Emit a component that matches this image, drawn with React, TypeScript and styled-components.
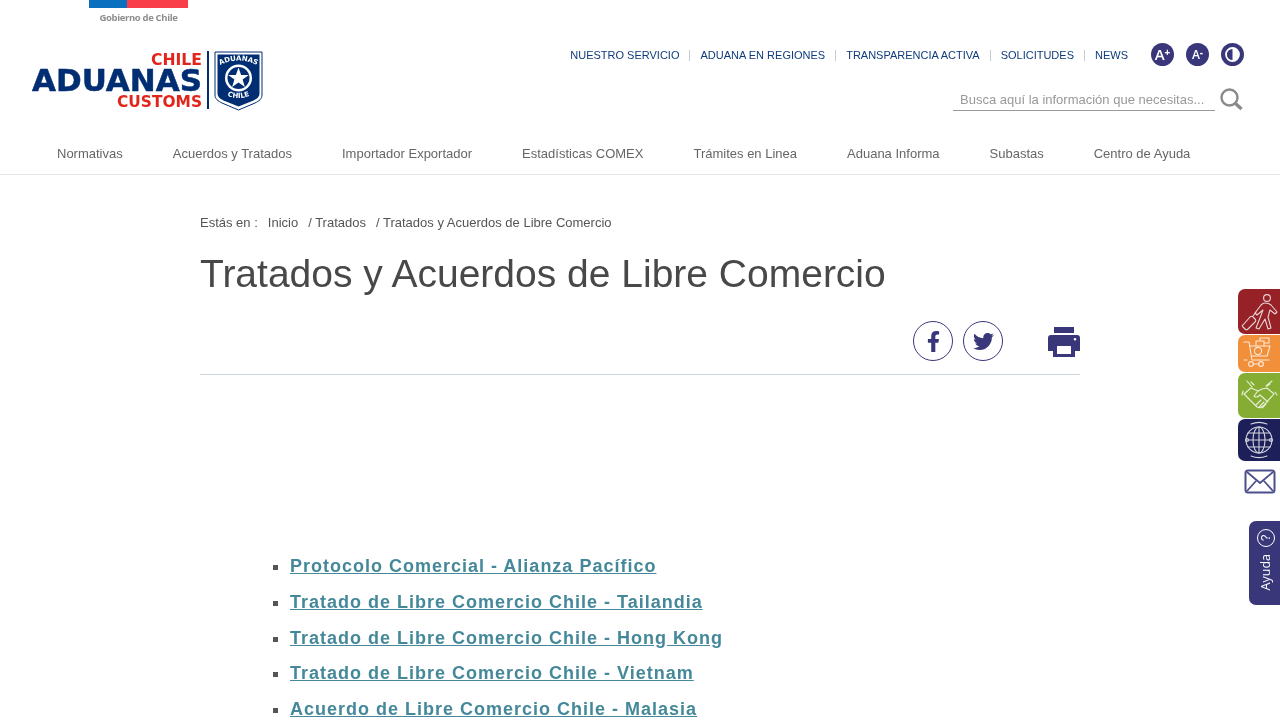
import React from "react";
import styled, { createGlobalStyle } from "styled-components";
import { FaFacebookF, FaTwitter } from "react-icons/fa";

const GlobalStyle = createGlobalStyle`
  html, body {
    margin: 0;
    padding: 0;
    height: 720px;
    overflow: hidden;
    background: #fff;
    font-family: "Liberation Sans", Arial, sans-serif;
    color: #555;
  }
`;

const Page = styled.div`
  position: relative;
  width: 1280px;
  height: 720px;
  overflow: hidden;
  will-change: transform;
`;

const GovMark = styled.div`
  width: 99px;
  margin-left: 89px;
  height: 24px;
`;

const Flag = styled.div`
  display: flex;
  height: 8px;
`;

const FlagPart = styled.div<{ $color: string; $width: number }>`
  width: ${(p) => p.$width}px;
  background: ${(p) => p.$color};
`;

const GovLabel = styled.div`
  margin-top: 4px;
  font-family: "Open Sans", sans-serif;
  font-size: 9.5px;
  line-height: 11px;
  font-weight: 700;
  color: #8f8f8f;
  text-align: center;
  white-space: nowrap;
  letter-spacing: -0.35px;
`;

const Header = styled.header`
  display: flex;
  justify-content: space-between;
  height: 110px;
  padding: 0 36px 0 32px;
`;

const LogoSvg = styled.svg`
  display: block;
  margin-top: 27px;
  width: 231px;
  height: 60px;
`;

const HeaderRight = styled.div`
  display: flex;
  flex-direction: column;
  align-items: flex-end;
  padding-top: 19px;
`;

const TopRow = styled.div`
  display: flex;
  align-items: center;
  height: 24px;
`;

const TopLink = styled.a`
  font-size: 11px;
  line-height: 11px;
  color: #0f3c7d;
  text-transform: uppercase;
  padding: 0 10px;
  border-left: 1px solid #c5ccd2;
  &:first-child {
    border-left: 0;
  }
`;

const A11yGroup = styled.div`
  display: flex;
  gap: 12px;
  margin-left: 13px;
`;

const A11yButton = styled.div<{ $size?: number }>`
  width: 23px;
  height: 23px;
  border-radius: 50%;
  background: #39377a;
  color: #fff;
  display: flex;
  align-items: center;
  justify-content: center;
  font-family: "Open Sans", sans-serif;
  font-weight: 600;
  font-size: ${(p) => p.$size ?? 15}px;
  line-height: 1;
  margin-top: -1px;
`;

const Sup = styled.span`
  font-size: 10px;
  font-weight: 700;
  margin-top: -5px;
`;

const SearchRow = styled.div`
  display: flex;
  align-items: center;
  margin-top: 21px;
  margin-right: 1px;
`;

const SearchField = styled.div`
  width: 255px;
  height: 21px;
  line-height: 22px;
  padding-left: 7px;
  border-bottom: 1px solid #999;
  font-size: 13px;
  color: #999;
  white-space: nowrap;
`;

const SearchIcon = styled.svg`
  display: block;
  width: 23px;
  height: 23px;
  margin-left: 5px;
`;

const Nav = styled.nav`
  display: flex;
  height: 40px;
  padding-left: 32px;
  border-bottom: 1px solid #e6e6e6;
`;

const NavItem = styled.a`
  padding: 0 25px;
  font-size: 13px;
  line-height: 39px;
  color: #666;
  white-space: nowrap;
`;

const Content = styled.main`
  width: 880px;
  margin: 0 auto;
  padding-top: 40px;
`;

const Breadcrumb = styled.div`
  font-size: 13px;
  line-height: 15px;
  color: #555;
  display: flex;
`;

const Crumb = styled.span<{ $gap: number }>`
  margin-right: ${(p) => p.$gap}px;
`;

const Title = styled.h1`
  margin: 21px 0 0;
  font-size: 39px;
  line-height: 46px;
  font-weight: 400;
  color: #484848;
`;

const ShareRow = styled.div`
  display: flex;
  align-items: center;
  height: 53px;
  margin-top: 17px;
  padding-bottom: 7px;
  box-sizing: content-box;
  border-bottom: 1px solid #c9d6de;
`;

const ShareCircle = styled.a<{ $first?: boolean }>`
  width: 40px;
  height: 40px;
  box-sizing: border-box;
  border: 1.7px solid #39377a;
  border-radius: 50%;
  color: #39377a;
  display: flex;
  align-items: center;
  justify-content: center;
  font-size: 21px;
  margin-top: 1px;
  margin-left: ${(p) => (p.$first ? "713px" : "10px")};
`;

const PrintIcon = styled.svg`
  display: block;
  width: 32px;
  height: 30px;
  margin: 2px 0 0 45px;
`;

const DocList = styled.ul`
  list-style: none;
  margin: 174px 0 0;
  padding: 0 0 0 90px;
`;

const DocItem = styled.li`
  position: relative;
  height: 35.75px;
  line-height: 35.75px;
  &::before {
    content: "";
    position: absolute;
    left: -17px;
    top: 16px;
    width: 5px;
    height: 5px;
    background: #555;
  }
`;

const DocLink = styled.a`
  font-size: 18px;
  font-weight: 700;
  letter-spacing: 1px;
  color: #44889a;
  text-decoration: underline;
`;

const SideDock = styled.div`
  position: absolute;
  top: 289px;
  right: 0;
  display: flex;
  flex-direction: column;
  align-items: flex-end;
`;

const SideTile = styled.div<{ $color: string; $height: number; $gap: number }>`
  width: 42px;
  height: ${(p) => p.$height}px;
  margin-bottom: ${(p) => p.$gap}px;
  background: ${(p) => p.$color};
  border-radius: 7px 0 0 7px;
`;

const TileIcon = styled.svg`
  display: block;
  width: 42px;
  height: 100%;
  fill: none;
  stroke: #fff;
  stroke-width: 1.1;
  stroke-linecap: round;
  stroke-linejoin: round;
  opacity: 0.8;
`;

const MailIcon = styled.svg`
  display: block;
  width: 32px;
  height: 26px;
  margin: 8px 4px 0 0;
`;

const HelpTab = styled.div`
  position: absolute;
  top: 521px;
  right: 0;
  width: 31px;
  height: 84px;
  background: #39377a;
  border-radius: 7px 0 0 7px;
  color: #fff;
  display: flex;
  flex-direction: column;
  align-items: center;
  padding: 8px 0 0 2px;
  box-sizing: border-box;
  gap: 7px;
`;

const HelpRing = styled.div`
  width: 18px;
  height: 18px;
  box-sizing: border-box;
  border: 1px solid #fff;
  border-radius: 50%;
  font-size: 12px;
  line-height: 16px;
  text-align: center;
  transform: rotate(-90deg);
`;

const HelpLabel = styled.div`
  font-family: "Open Sans", sans-serif;
  font-size: 12.5px;
  line-height: 16px;
  writing-mode: vertical-rl;
  transform: rotate(180deg);
`;

const navItems = [
  "Normativas",
  "Acuerdos y Tratados",
  "Importador Exportador",
  "Estadísticas COMEX",
  "Trámites en Linea",
  "Aduana Informa",
  "Subastas",
  "Centro de Ayuda",
];

const topLinks = [
  "Nuestro Servicio",
  "Aduana en Regiones",
  "Transparencia Activa",
  "Solicitudes",
  "News",
];

const docs = [
  "Protocolo Comercial - Alianza Pacífico",
  "Tratado de Libre Comercio Chile - Tailandia",
  "Tratado de Libre Comercio Chile - Hong Kong",
  "Tratado de Libre Comercio Chile - Vietnam",
  "Acuerdo de Libre Comercio Chile - Malasia",
];

const Logo = () => (
  <LogoSvg viewBox="0 0 231 60">
    <g fontFamily="'DejaVu Sans', sans-serif" fontWeight="700">
      <text x="119" y="14" fontSize="15" fill="#e1251b" textLength="51" lengthAdjust="spacingAndGlyphs">CHILE</text>
      <text x="0" y="40" fontSize="30" fill="#012e73" stroke="#012e73" strokeWidth="0.5" textLength="170" lengthAdjust="spacingAndGlyphs">ADUANAS</text>
      <text x="85" y="56" fontSize="15" fill="#e1251b" textLength="85" lengthAdjust="spacingAndGlyphs">CUSTOMS</text>
    </g>
    <rect x="175" y="0" width="2" height="58" fill="#012e73" />
    <path d="M183 1h47v43c0 4-3 6-7 8l-16.500 7-16.500-7c-4-2-7-4-7-8z" fill="#fff" stroke="#012e73" strokeWidth="1" />
    <path d="M185.500 3.500h42v39c0 3-2 5-6 7l-15 6-15-6c-4-2-6-4-6-7z" fill="#012e73" />
    <circle cx="206.500" cy="27" r="13.500" fill="#fff" />
    <circle cx="206.500" cy="27" r="11" fill="#012e73" />
    <path d="M206.500 16.500l2.600 7.500h7.700l-6.200 4.600 2.300 7.400-6.400-4.500-6.400 4.500 2.300-7.400-6.200-4.600h7.700z" fill="#fff" />
    <defs>
      <path id="shield-top" d="M188 14q18.500-9 37 0" />
      <path id="shield-bottom" d="M193 44q13.500 6 27 0" />
    </defs>
    <g fontFamily="'DejaVu Sans', sans-serif" fontWeight="700" fill="#fff" fontSize="7">
      <text>
        <textPath href="#shield-top" startOffset="50%" textAnchor="middle">ADUANAS</textPath>
      </text>
      <text>
        <textPath href="#shield-bottom" startOffset="50%" textAnchor="middle">CHILE</textPath>
      </text>
    </g>
  </LogoSvg>
);

const Traveller = () => (
  <TileIcon viewBox="0 0 42 45">
    <circle cx="29" cy="9" r="3.400" />
    <path d="M27 14c-2 0-3 1-4 2l-6 8 2 2 6-5-3 8-4 10 3 1 6-10 3 10 3-1-3-11 2-7 5 4 2-2-6-7c-2-2-4-2-6-2z" />
    <path d="M5 36l7-8c1-1 2-1 3 0l2 2c1 1 1 2 0 3l-7 7c-1 1-2 1-3 0l-2-2c-1-1-1-2 0-2z" />
    <path d="M15 27l3-4" />
  </TileIcon>
);

const Cart = () => (
  <TileIcon viewBox="0 0 42 37">
    <path d="M6 7h5l3 18h17" />
    <path d="M12 11h20l-3 10H14" />
    <path d="M18 11V6h8v5M22 6V3h9v5h-5" />
    <circle cx="20" cy="16" r="3.600" />
    <path d="M9 25h-3" />
    <circle cx="13" cy="29" r="2.400" />
    <circle cx="23" cy="29" r="2.400" />
    <path d="M15 29h6" />
  </TileIcon>
);

const Handshake = () => (
  <TileIcon viewBox="0 0 42 45">
    <path d="M6 21l7-6 7 3 4-2 5-1 7 6-11 12c-2 2-4 2-6 1z" />
    <path d="M20 18l-4 5c2 2 4 1 6-1l8 7M18 32l5-5M21 34l5-5M24 35l4-4" />
    <path d="M14 14l-5-6M28 13l6-5M13 9l3 3M32 11l-3 2" />
    <path d="M5 18l-1 4M37 19l2 3" />
  </TileIcon>
);

const Globe = () => (
  <TileIcon viewBox="0 0 42 42">
    <circle cx="21" cy="21" r="13" />
    <ellipse cx="21" cy="21" rx="6" ry="13" />
    <path d="M21 8v26M8 21h26M10 14h22M10 28h22" />
    <path d="M13 5c5-2 11-2 16 0M29 37c-5 2-11 2-16 0" />
    <circle cx="9" cy="21" r="1.500" />
    <circle cx="33" cy="21" r="1.500" />
  </TileIcon>
);

export default function App() {
  return (
    <Page>
      <GlobalStyle />
      <GovMark>
        <Flag>
          <FlagPart $color="#0b6fbf" $width={38} />
          <FlagPart $color="#f93e4a" $width={61} />
        </Flag>
        <GovLabel>Gobierno de Chile</GovLabel>
      </GovMark>

      <Header>
        <Logo />
        <HeaderRight>
          <TopRow>
            {topLinks.map((link) => (
              <TopLink key={link}>{link}</TopLink>
            ))}
            <A11yGroup>
              <A11yButton>A<Sup>+</Sup></A11yButton>
              <A11yButton $size={12}>A<Sup>-</Sup></A11yButton>
              <A11yButton>
                <svg width="17" height="17" viewBox="0 0 17 17">
                  <circle cx="8.500" cy="8.500" r="6.500" fill="none" stroke="#fff" strokeWidth="1.800" />
                  <path d="M8.500 2a6.500 6.500 0 0 1 0 13z" fill="#fff" />
                </svg>
              </A11yButton>
            </A11yGroup>
          </TopRow>
          <SearchRow>
            <SearchField>Busca aquí la información que necesitas...</SearchField>
            <SearchIcon viewBox="0 0 23 23">
              <circle cx="9.500" cy="9.500" r="8" fill="none" stroke="#8a8a8a" strokeWidth="2.400" />
              <path d="M15.500 15.500l6 5.500" stroke="#8a8a8a" strokeWidth="3.400" />
            </SearchIcon>
          </SearchRow>
        </HeaderRight>
      </Header>

      <Nav>
        {navItems.map((item) => (
          <NavItem key={item}>{item}</NavItem>
        ))}
      </Nav>

      <Content>
        <Breadcrumb>
          <Crumb $gap={10}>Estás en :</Crumb>
          <Crumb $gap={10}>Inicio</Crumb>
          <Crumb $gap={10}>/ Tratados</Crumb>
          <Crumb $gap={0}>/ Tratados y Acuerdos de Libre Comercio</Crumb>
        </Breadcrumb>
        <Title>Tratados y Acuerdos de Libre Comercio</Title>
        <ShareRow>
          <ShareCircle $first>
            <FaFacebookF />
          </ShareCircle>
          <ShareCircle>
            <FaTwitter />
          </ShareCircle>
          <PrintIcon viewBox="0 0 32 30">
            <path
              fill="#39377a"
              fillRule="evenodd"
              d="M6 0h20v6H6zM3 8h26c2 0 3 1 3 3v13h-5v6H5v-6H0V11c0-2 1-3 3-3zm6 11v8h14v-8zm18-8a1.300 1.300 0 1 0 0 2.600 1.300 1.300 0 0 0 0-2.600z"
            />
          </PrintIcon>
        </ShareRow>
        <DocList>
          {docs.map((doc) => (
            <DocItem key={doc}>
              <DocLink>{doc}</DocLink>
            </DocItem>
          ))}
        </DocList>
      </Content>

      <SideDock>
        <SideTile $color="#962126" $height={45} $gap={1}><Traveller /></SideTile>
        <SideTile $color="#f28f3b" $height={37} $gap={1}><Cart /></SideTile>
        <SideTile $color="#86ad33" $height={45} $gap={1}><Handshake /></SideTile>
        <SideTile $color="#1d1f58" $height={42} $gap={0}><Globe /></SideTile>
        <MailIcon viewBox="0 0 32 26">
          <rect x="1.500" y="1.500" width="29" height="22" rx="2.500" fill="none" stroke="#4d4f8c" strokeWidth="2" />
          <path d="M3 3l13 11L29 3M3 22l9-10M29 22l-9-10" fill="none" stroke="#4d4f8c" strokeWidth="1.800" />
        </MailIcon>
      </SideDock>

      <HelpTab>
        <HelpRing>?</HelpRing>
        <HelpLabel>Ayuda</HelpLabel>
      </HelpTab>
    </Page>
  );
}
